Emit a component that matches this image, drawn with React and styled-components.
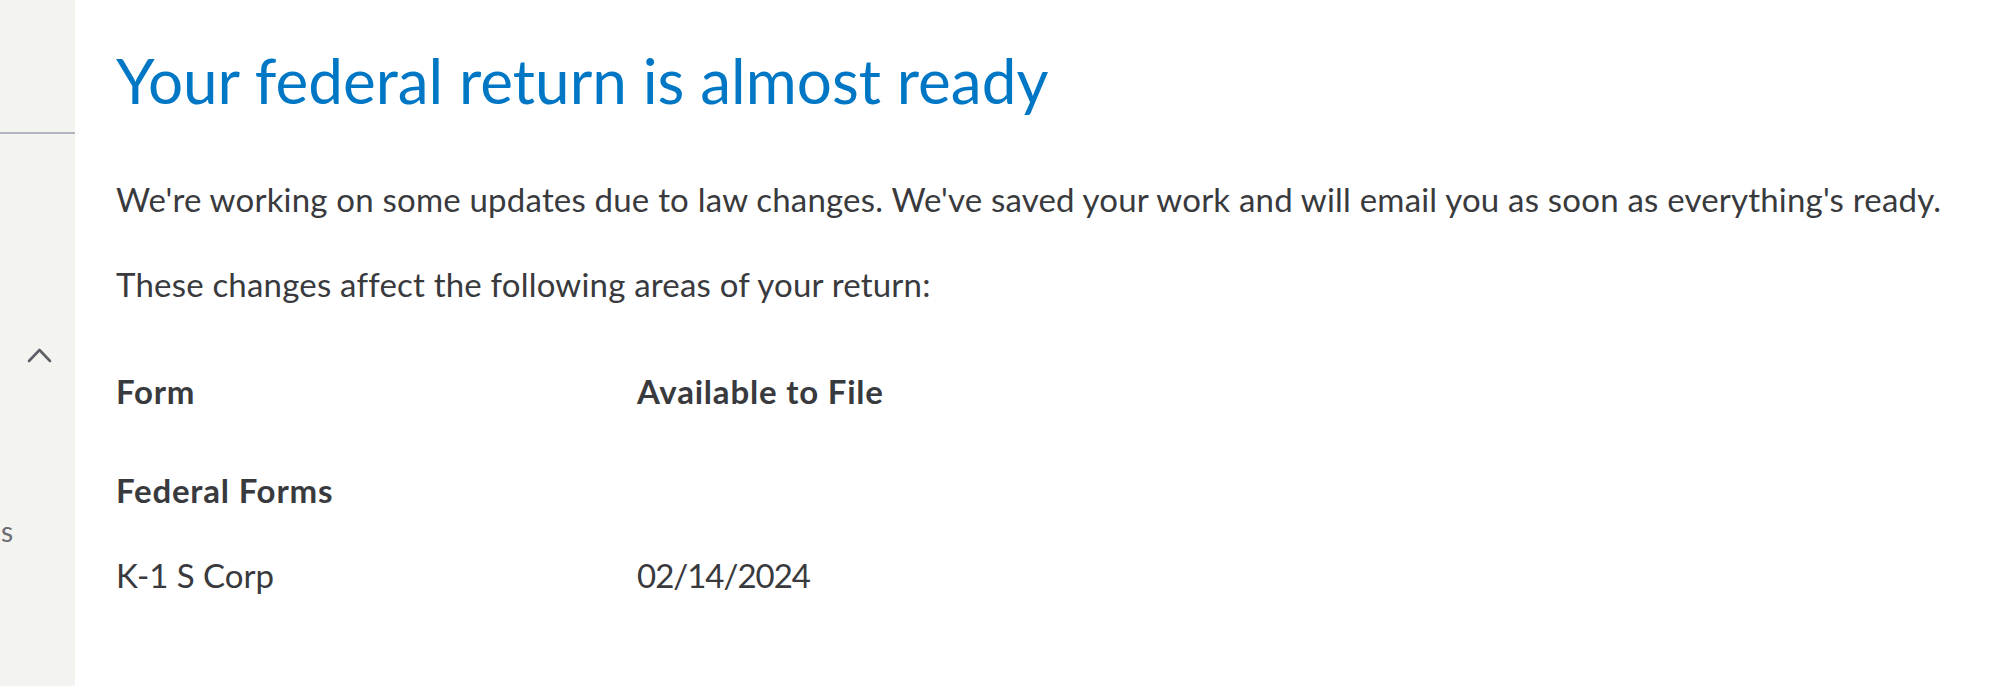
import React from "react";
import styled, { createGlobalStyle } from "styled-components";

const Global = createGlobalStyle`
  html, body { margin: 0; padding: 0; background: #ffffff; }
  body { font-family: Lato, "Noto Sans", sans-serif; color: #393a3d; }
`;

const Page = styled.div`
  display: flex;
  width: 2015px;
  height: 686px;
  overflow: hidden;
`;

const Sidebar = styled.aside`
  flex: 0 0 75px;
  background: #f3f3ef;
  display: flex;
  flex-direction: column;
`;

const SideTop = styled.div`
  height: 132px;
`;

const SideDivider = styled.div`
  height: 2px;
  background: #b0b6c1;
`;

const CollapseButton = styled.button`
  margin: 213px 0 0 27px;
  width: 25px;
  height: 16px;
  padding: 0;
  border: 0;
  background: none;
  display: flex;
  color: #5d6066;
`;

const SideLabel = styled.div`
  margin-top: 153px;
  width: 13px;
  display: flex;
  justify-content: flex-end;
  white-space: nowrap;
  font-size: 28px;
  line-height: 30px;
  color: #6b6c72;
`;

const Main = styled.main`
  flex: 1;
  padding: 40px 0 0 41px;
  display: flex;
  flex-direction: column;
`;

const Title = styled.h1`
  margin: 0;
  font-weight: 400;
  font-size: 62px;
  line-height: 80px;
  color: #0077c5;
`;

const Text = styled.p`
  margin: ${(p) => p.$mt}px 0 0;
  font-size: 33px;
  line-height: 40px;
  letter-spacing: 0.2px;
  white-space: nowrap;
  color: #393a3d;
`;

const Table = styled.div`
  display: grid;
  grid-template-columns: 521px auto;
  margin-top: 67px;
`;

const Cell = styled.div`
  font-size: 33px;
  line-height: 40px;
  font-weight: ${(p) => (p.$bold ? 700 : 400)};
  letter-spacing: ${(p) => (p.$bold ? "0.8px" : p.$numeric ? "-1px" : "0px")};
  padding-bottom: ${(p) => p.$pb || 0}px;
  color: #393a3d;
`;

export default function App() {
  return (
    <>
      <Global />
      <Page>
        <Sidebar>
          <SideTop />
          <SideDivider />
          <CollapseButton aria-label="Collapse">
            <svg width="25" height="16" viewBox="0 0 25 16" fill="none">
              <path d="M2 14 L12.5 3 L23 14" stroke="currentColor" strokeWidth="2.6" strokeLinecap="round" strokeLinejoin="round" />
            </svg>
          </CollapseButton>
          <SideLabel>
            <span>s</span>
          </SideLabel>
        </Sidebar>
        <Main>
          <Title>Your federal return is almost ready</Title>
          <Text $mt={59}>
            We're working on some updates due to law changes. We've saved your work and will email you as soon as everything's ready.
          </Text>
          <Text $mt={45}>These changes affect the following areas of your return:</Text>
          <Table>
            <Cell $bold $pb={59}>Form</Cell>
            <Cell $bold $pb={59}>Available to File</Cell>
            <Cell $bold $pb={45}>Federal Forms</Cell>
            <Cell />
            <Cell>K-1 S Corp</Cell>
            <Cell $numeric>02/14/2024</Cell>
          </Table>
        </Main>
      </Page>
    </>
  );
}
